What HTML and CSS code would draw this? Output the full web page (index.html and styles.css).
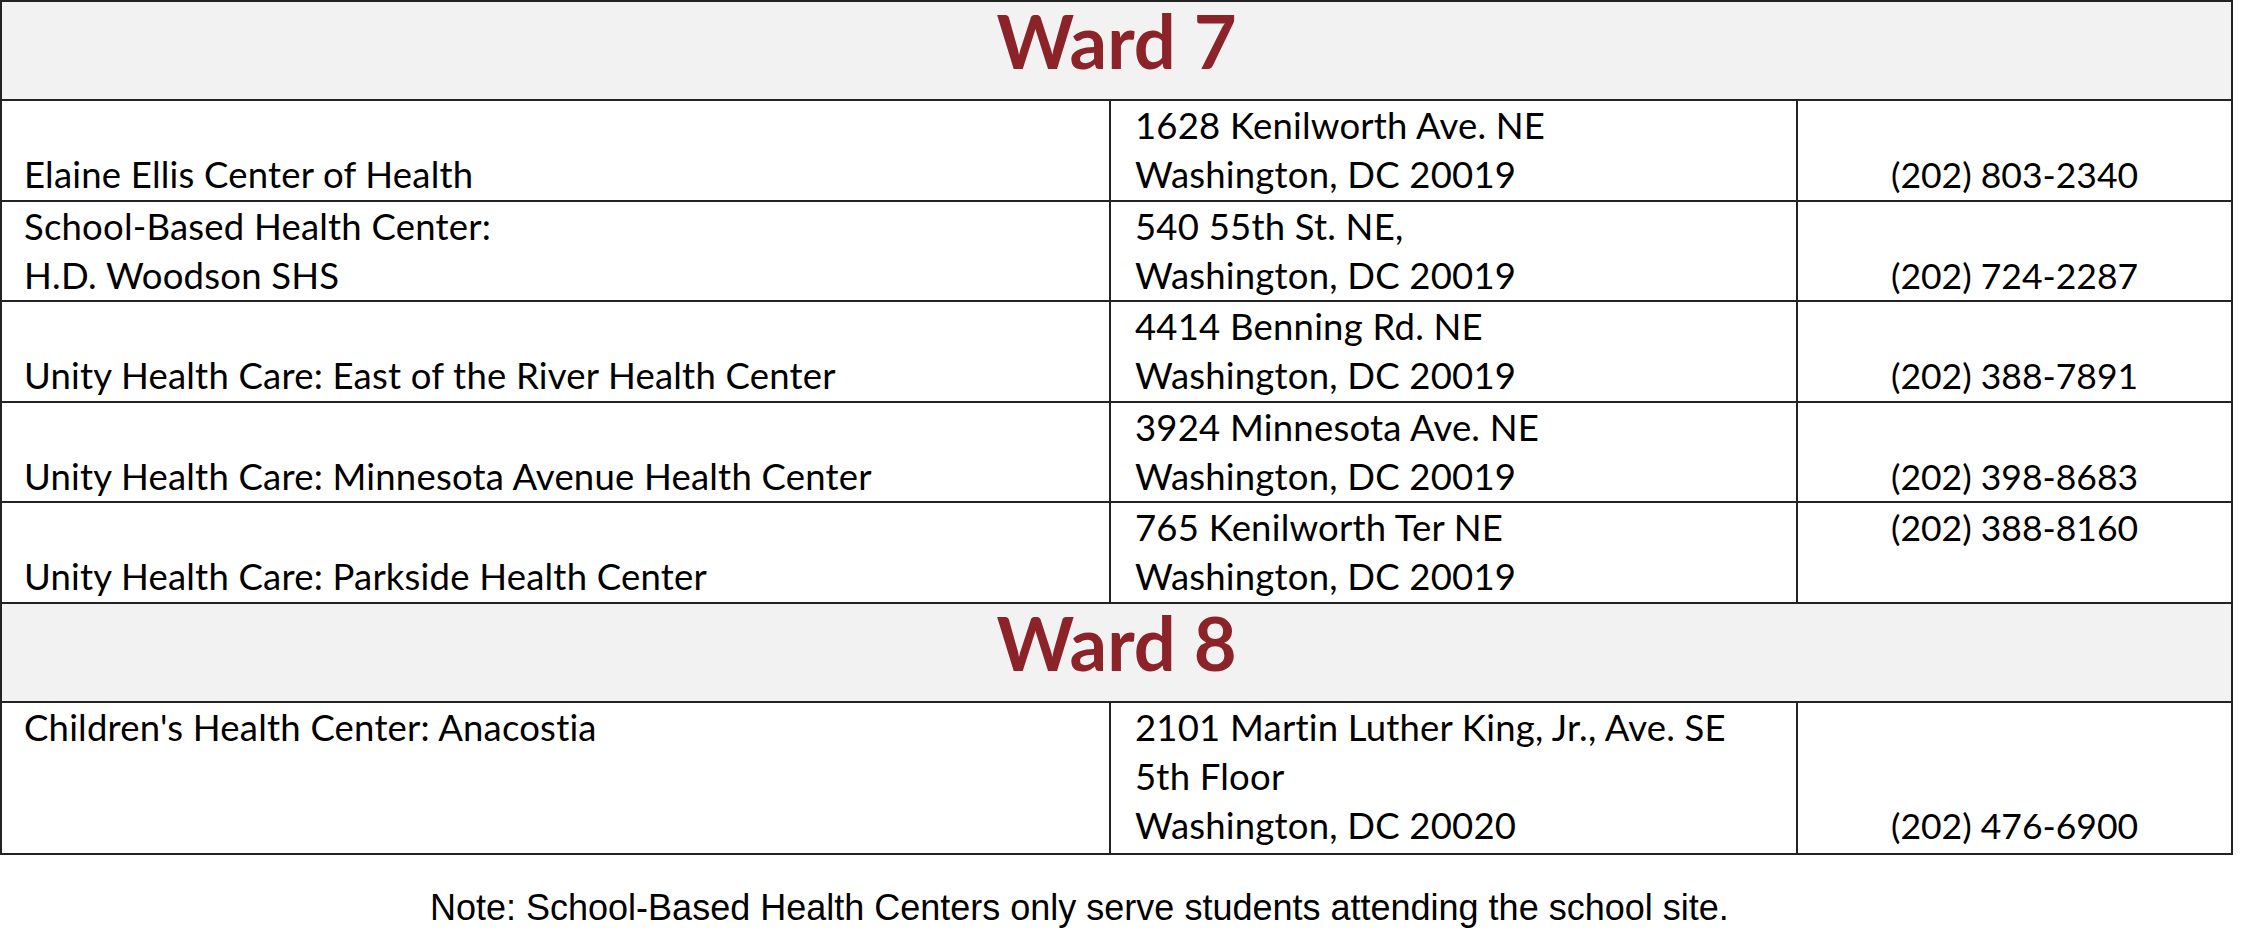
FILE: index.html
```html
<!DOCTYPE html>
<html lang="en">
<head>
<meta charset="utf-8">
<title>Ward 7 and Ward 8 Health Centers</title>
<link rel="stylesheet" href="styles.css">
</head>
<body>
<table class="centers">
  <colgroup>
    <col class="c-name">
    <col class="c-addr">
    <col class="c-phone">
  </colgroup>
  <tbody>
    <tr class="ward">
      <th colspan="3">Ward 7</th>
    </tr>
    <tr>
      <td class="name">Elaine Ellis Center of Health</td>
      <td>1628 Kenilworth Ave. NE<br>Washington, DC 20019</td>
      <td class="phone">(202) 803-2340</td>
    </tr>
    <tr>
      <td class="name">School-Based Health Center:<br>H.D. Woodson SHS</td>
      <td>540 55th St. NE,<br>Washington, DC 20019</td>
      <td class="phone">(202) 724-2287</td>
    </tr>
    <tr>
      <td class="name">Unity Health Care: East of the River Health Center</td>
      <td>4414 Benning Rd. NE<br>Washington, DC 20019</td>
      <td class="phone">(202) 388-7891</td>
    </tr>
    <tr>
      <td class="name">Unity Health Care: Minnesota Avenue Health Center</td>
      <td>3924 Minnesota Ave. NE<br>Washington, DC 20019</td>
      <td class="phone">(202) 398-8683</td>
    </tr>
    <tr>
      <td class="name">Unity Health Care: Parkside Health Center</td>
      <td>765 Kenilworth Ter NE<br>Washington, DC 20019</td>
      <td class="phone top">(202) 388-8160</td>
    </tr>
    <tr class="ward">
      <th colspan="3">Ward 8</th>
    </tr>
    <tr class="tall">
      <td class="name top">Children's Health Center: Anacostia</td>
      <td>2101 Martin Luther King, Jr., Ave. SE<br>5th Floor<br>Washington, DC 20020</td>
      <td class="phone">(202) 476-6900</td>
    </tr>
  </tbody>
</table>
<p class="note">Note: School-Based Health Centers only serve students attending the school site.</p>
</body>
</html>
```

FILE: styles.css
```css
html, body {
  margin: 0;
  padding: 0;
  background: #ffffff;
}

body {
  font-family: "Lato", "Liberation Sans", sans-serif;
  color: #000000;
}

.centers {
  border-collapse: collapse;
  table-layout: fixed;
  width: 2231px;
  margin: 0;
}

.c-name { width: 1109px; }
.c-addr { width: 687px; }
.c-phone { width: 435px; }

.centers th,
.centers td {
  border: 2px solid #232323;
}

.ward th {
  background: #f2f2f2;
  color: #8c2329;
  font-family: "Lato", "Liberation Sans", sans-serif;
  font-weight: 700;
  font-size: 74px;
  line-height: 77px;
  padding: 0 0 20px 0;
  text-align: center;
  vertical-align: top;
}

.centers td {
  font-size: 36.5px;
  letter-spacing: 0.2px;
  line-height: 49px;
  padding: 0 24px 0.5px 24px;
  vertical-align: bottom;
  text-align: left;
  white-space: nowrap;
}

.centers td.name {
  padding-left: 22px;
}

.centers td.phone {
  text-align: center;
  font-size: 35.5px;
  letter-spacing: 0;
}

.centers td.top {
  vertical-align: top;
}

.tall td {
  padding-bottom: 3px;
}

.note {
  margin: 32px 0 0 0;
  padding-left: 430px;
  font-family: "Liberation Sans", Arial, sans-serif;
  font-size: 36px;
  line-height: 41px;
  color: #000000;
}
```
